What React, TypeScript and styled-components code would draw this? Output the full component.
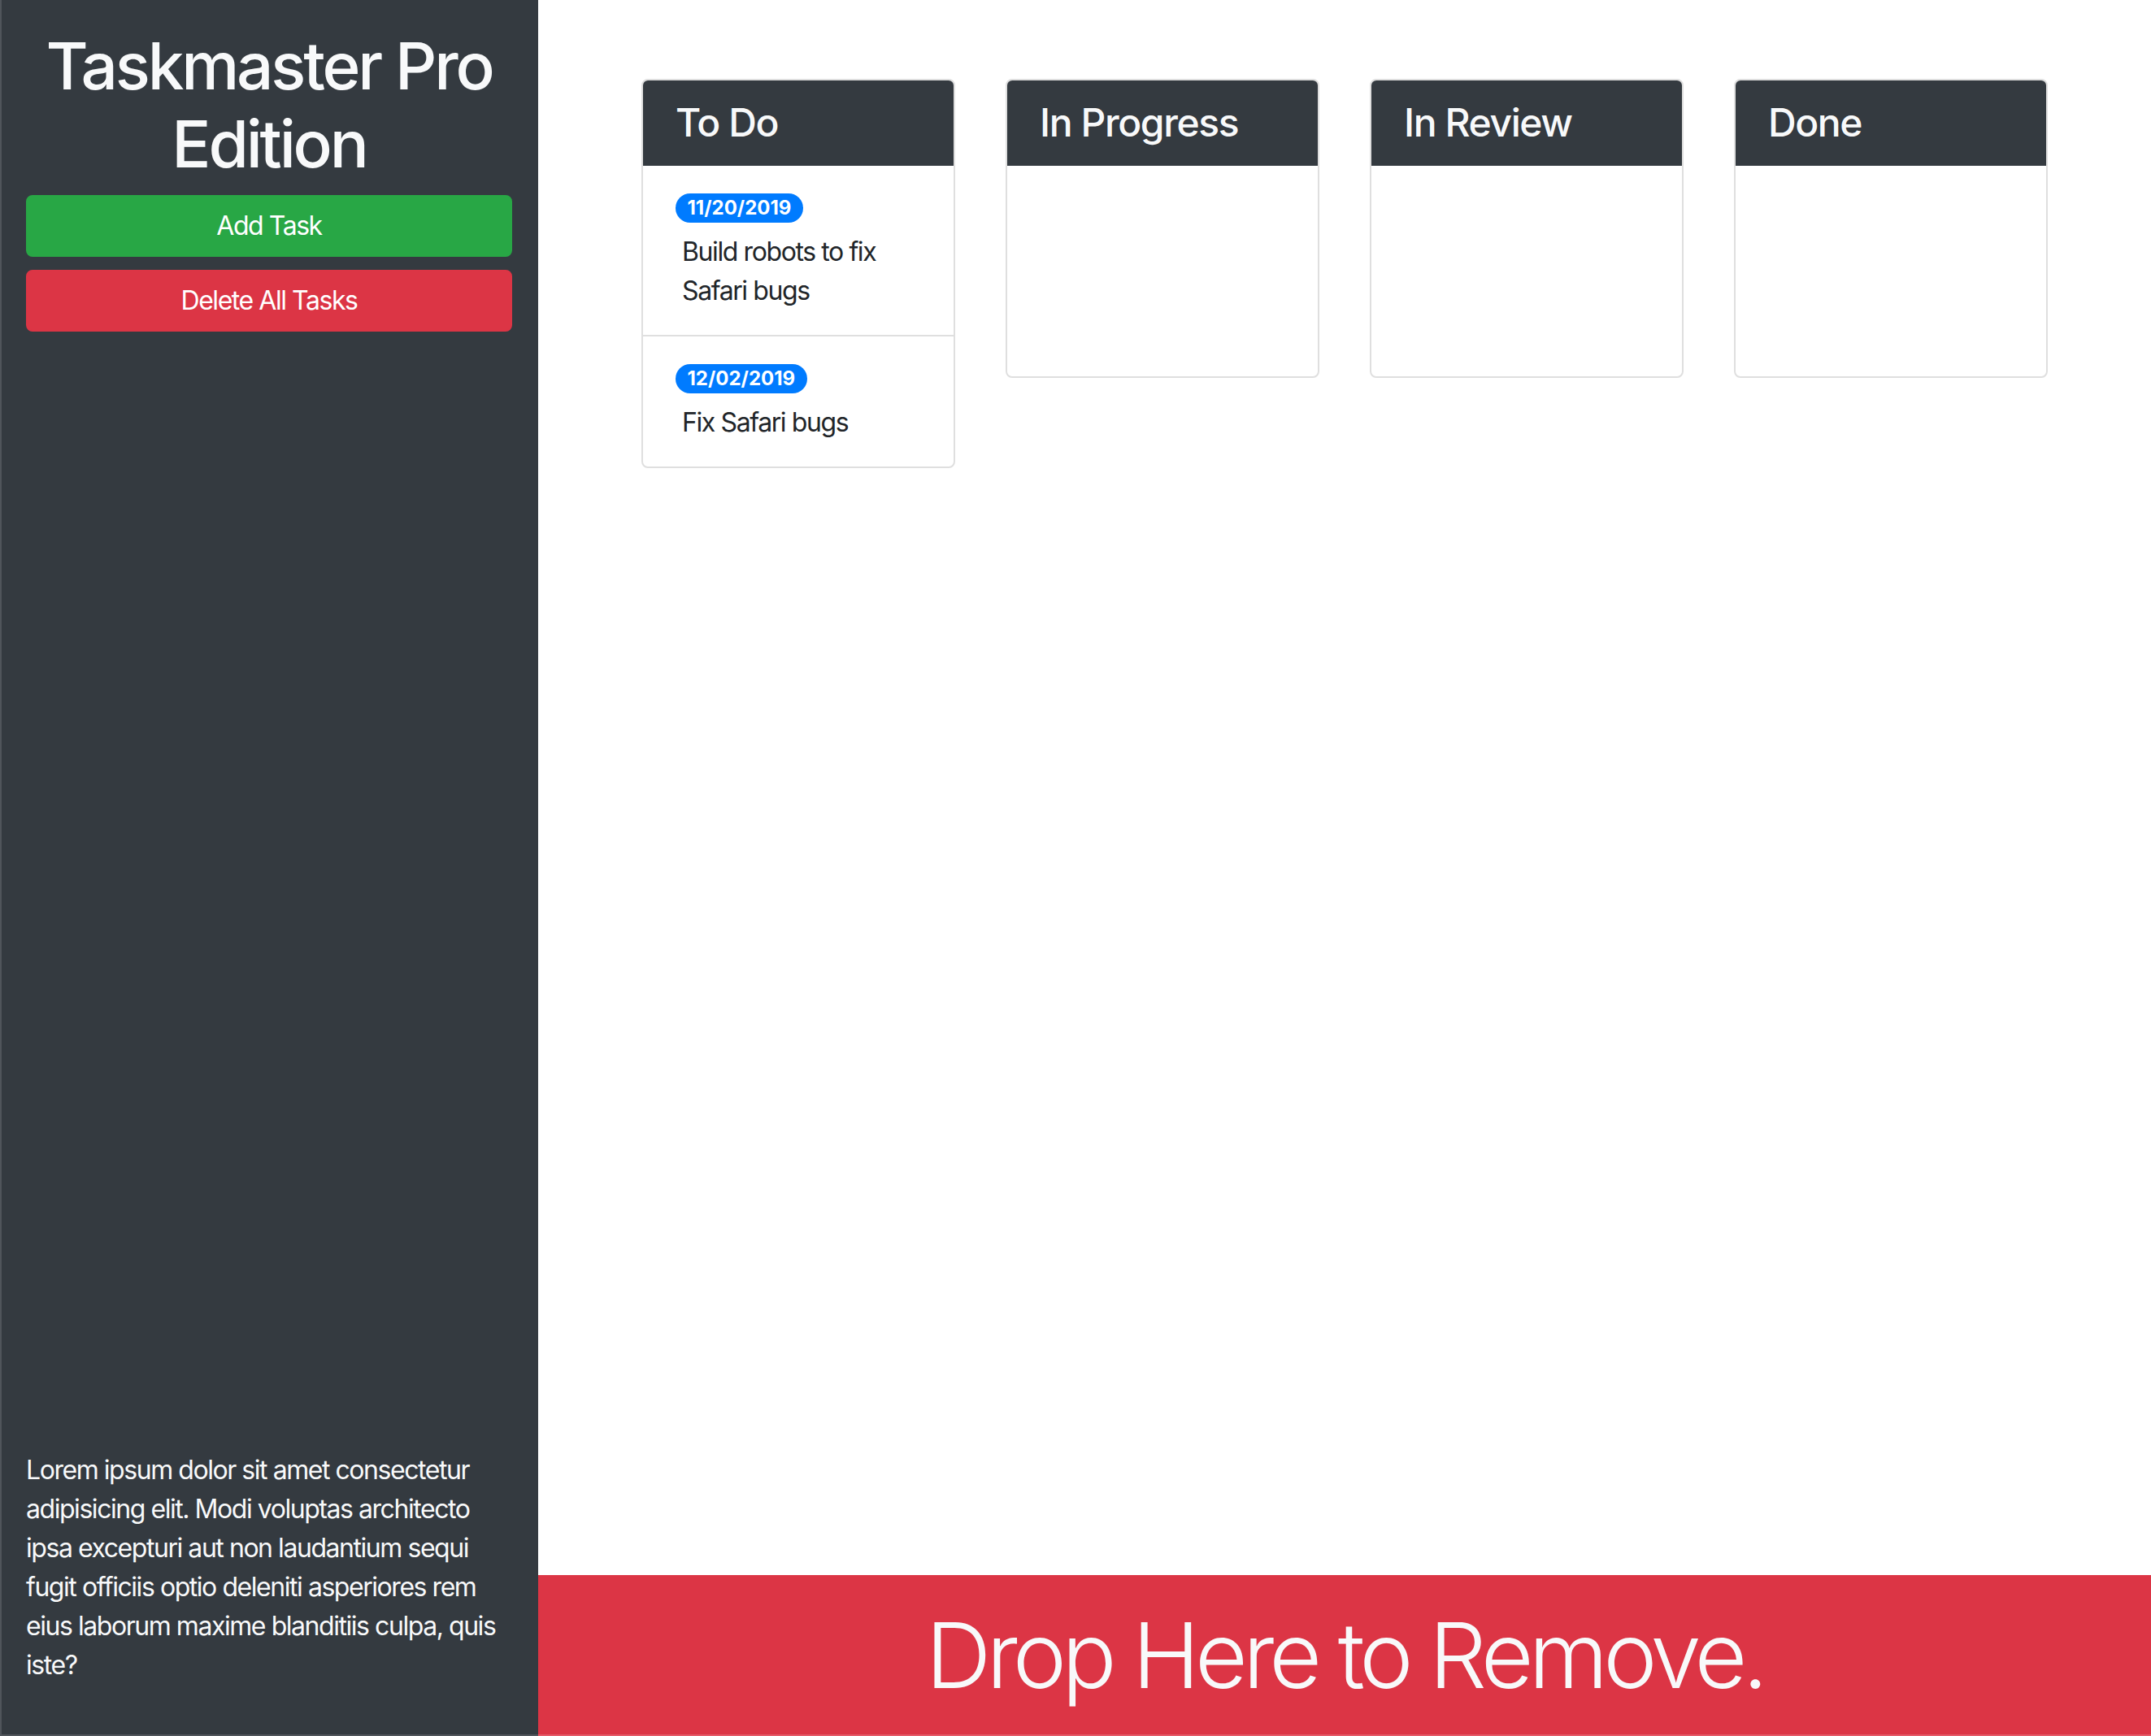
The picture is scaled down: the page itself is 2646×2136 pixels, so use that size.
import React from "react";
import styled, { createGlobalStyle } from "styled-components";

const GlobalStyle = createGlobalStyle`
  html, body {
    margin: 0;
    padding: 0;
  }
  body {
    font-family: Inter, "Noto Sans", "Liberation Sans", sans-serif;
    color: #212529;
    background: #ffffff;
  }
  * { box-sizing: border-box; }
`;

const Shell = styled.div`
  display: flex;
  width: 2646px;
  height: 2136px;
  overflow: hidden;
`;

const Sidebar = styled.aside`
  width: 662px;
  flex-shrink: 0;
  background: #343a40;
  border-left: 2px solid #50555b;
  border-bottom: 2px solid #50555b;
  padding: 33px 32px 32px 30px;
  display: flex;
  flex-direction: column;
`;

const Title = styled.h1`
  margin: 0 0 15px;
  font-size: 80px;
  line-height: 96px;
  font-weight: 500;
  color: #f8f9fa;
  text-align: center;
  letter-spacing: -3.2px;
`;

const ActionButton = styled.button<{ $variant: "success" | "danger" }>`
  display: block;
  width: 100%;
  height: 76px;
  border: 2px solid ${(p) => (p.$variant === "success" ? "#28a745" : "#dc3545")};
  background: ${(p) => (p.$variant === "success" ? "#28a745" : "#dc3545")};
  color: #ffffff;
  border-radius: 8px;
  font-family: inherit;
  font-size: 32px;
  font-weight: 400;
  line-height: 48px;
  letter-spacing: -1.45px;
  padding: 0;
  & + & {
    margin-top: 16px;
  }
`;

const About = styled.p`
  margin: auto 0 29px;
  font-size: 32px;
  line-height: 48px;
  color: #f8f9fa;
  letter-spacing: -1.45px;
`;

const Main = styled.main`
  flex: 1;
  display: flex;
  flex-direction: column;
  min-width: 0;
`;

const Board = styled.section`
  flex: 1;
  display: flex;
  justify-content: center;
  align-items: flex-start;
  gap: 62px;
  padding-top: 97px;
`;

const Column = styled.div`
  width: 386px;
  border: 2px solid #dfdfdf;
  border-radius: 8px;
  overflow: hidden;
  background: #ffffff;
`;

const ColumnHeader = styled.div`
  background: #343a40;
  margin: -2px -2px 0;
  padding: 25px 42px 24px;
  border-radius: 8px 8px 0 0;
  height: 107px;
`;

const ColumnTitle = styled.h4`
  margin: 0;
  font-size: 48px;
  line-height: 58px;
  font-weight: 500;
  color: #f8f9fa;
  letter-spacing: -1.4px;
`;

const TaskList = styled.div`
  min-height: 259px;
`;

const TaskItem = styled.div`
  padding: 34px 40px 30px;
  & + & {
    border-top: 2px solid #dfdfdf;
  }
`;

const DateBadge = styled.span`
  display: inline-block;
  height: 36px;
  padding: 0 14.5px;
  border-radius: 18px;
  background: #007bff;
  color: #ffffff;
  font-size: 24px;
  line-height: 36px;
  font-weight: 700;
`;

const TaskText = styled.p`
  margin: 12px 0 0;
  padding-left: 8px;
  font-size: 32px;
  line-height: 48px;
  color: #212529;
  letter-spacing: -1.4px;
`;

const DropZone = styled.div`
  height: 198px;
  background: #dc3545;
  border-bottom: 2px solid #e55a67;
  display: flex;
  align-items: center;
  justify-content: center;
`;

const DropText = styled.span`
  font-size: 112px;
  line-height: 134px;
  font-weight: 300;
  color: #f8f9fa;
  letter-spacing: -6px;
`;

type Task = { date: string; text: string };
type Col = { title: string; tasks: Task[] };

const columns: Col[] = [
  {
    title: "To Do",
    tasks: [
      { date: "11/20/2019", text: "Build robots to fix Safari bugs" },
      { date: "12/02/2019", text: "Fix Safari bugs" },
    ],
  },
  { title: "In Progress", tasks: [] },
  { title: "In Review", tasks: [] },
  { title: "Done", tasks: [] },
];

export default function App() {
  return (
    <>
      <GlobalStyle />
      <Shell>
        <Sidebar>
          <Title>Taskmaster Pro Edition</Title>
          <ActionButton $variant="success">Add Task</ActionButton>
          <ActionButton $variant="danger">Delete All Tasks</ActionButton>
          <About>
            Lorem ipsum dolor sit amet consectetur adipisicing elit. Modi voluptas
            architecto ipsa excepturi aut non laudantium sequi fugit officiis optio
            deleniti asperiores rem eius laborum maxime blanditiis culpa, quis iste?
          </About>
        </Sidebar>
        <Main>
          <Board>
            {columns.map((col) => (
              <Column key={col.title}>
                <ColumnHeader>
                  <ColumnTitle>{col.title}</ColumnTitle>
                </ColumnHeader>
                <TaskList>
                  {col.tasks.map((t) => (
                    <TaskItem key={t.date}>
                      <DateBadge>{t.date}</DateBadge>
                      <TaskText>{t.text}</TaskText>
                    </TaskItem>
                  ))}
                </TaskList>
              </Column>
            ))}
          </Board>
          <DropZone>
            <DropText>Drop Here to Remove.</DropText>
          </DropZone>
        </Main>
      </Shell>
    </>
  );
}
